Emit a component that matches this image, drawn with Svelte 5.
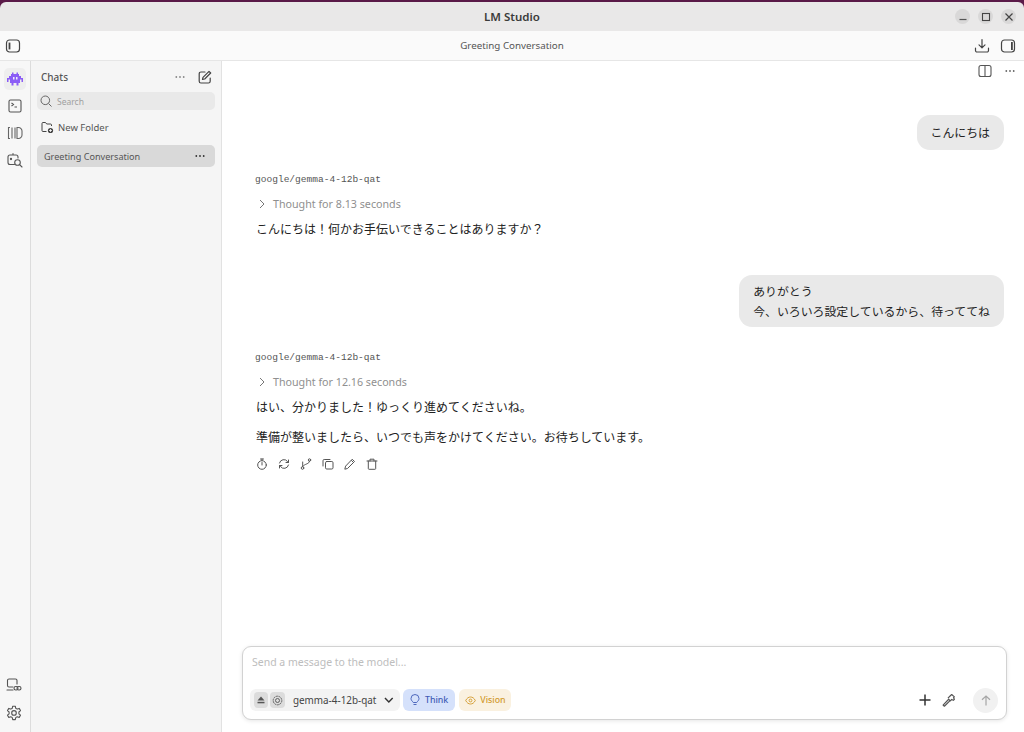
<script>
  let draft = $state("");
</script>

{#snippet dots(color)}
  <svg class="dot-icon" width="10" height="4" viewBox="0 0 10 4" fill={color}><circle cx="1.300" cy="2" r=".9"/><circle cx="5" cy="2" r=".9"/><circle cx="8.700" cy="2" r=".9"/></svg>
{/snippet}

<div class="window">
  <header class="titlebar">
    <span class="title">LM Studio</span>
    <div class="wm">
      <span class="wm-btn"><svg width="10" height="10" viewBox="0 0 10 10"><path d="M1.500 7.500h7" stroke="#555" stroke-width="1.200"/></svg></span>
      <span class="wm-btn"><svg width="10" height="10" viewBox="0 0 10 10"><rect x="1.500" y="1.500" width="7" height="7" fill="none" stroke="#444" stroke-width="1.100"/></svg></span>
      <span class="wm-btn"><svg width="10" height="10" viewBox="0 0 10 10"><path d="M1.500 1.500l7 7M8.500 1.500l-7 7" stroke="#444" stroke-width="1.200"/></svg></span>
    </div>
  </header>

  <div class="toolbar">
    <svg class="tb-left" width="16" height="16" viewBox="0 0 16 16" fill="none" stroke="#444" stroke-width="1.200"><rect x="1.500" y="2" width="13" height="12" rx="3"/><rect x="3.600" y="4.600" width="1.800" height="6.800" fill="#444" stroke="none"/></svg>
    <span class="conv-title">Greeting Conversation</span>
    <div class="tb-right">
      <svg width="16" height="16" viewBox="0 0 16 16" fill="none" stroke="#444" stroke-width="1.200" stroke-linecap="round" stroke-linejoin="round"><path d="M8 1.500v8M5 6.800l3 3 3-3M1.500 10v2.500a1.500 1.500 0 0 0 1.500 1.500h10a1.500 1.500 0 0 0 1.500-1.500V10"/></svg>
      <svg width="16" height="16" viewBox="0 0 16 16" fill="none" stroke="#444" stroke-width="1.200"><rect x="1.500" y="2" width="13" height="12" rx="3"/><rect x="11" y="4" width="1.800" height="8" fill="#444" stroke="none"/></svg>
    </div>
  </div>

  <div class="body">
    <nav class="rail">
      <div class="rail-top">
        <span class="rail-btn active">
          <svg width="18" height="16" viewBox="0 0 18 16" fill="#8b5cf6"><path d="M6 1.500h1.500V3h3V1.500H12V3h1v2h2v2h2v4h-1.500V8.500H14V12h-1.500v2.500H10.500V12h-3v2.500H5.500V12H4V8.500H2.500V11H1V7h2V5h2V3h1z"/><rect x="7" y="6" width="1.500" height="2.500" fill="#efe9fb"/><rect x="10" y="6" width="1.500" height="2.500" fill="#efe9fb"/></svg>
        </span>
        <span class="rail-btn">
          <svg width="14" height="14" viewBox="0 0 14 14" fill="none" stroke="#555" stroke-width="1.100"><rect x="1" y="1" width="12" height="12" rx="1.500"/><path d="M3.500 4l2 1.500-2 1.500M6.500 8h2.500"/></svg>
        </span>
        <span class="rail-btn">
          <svg width="16" height="14" viewBox="0 0 16 14" fill="none" stroke="#666" stroke-width="1.100"><path d="M3 1.500H1.500v11H3M5 1.500v11M8 1.500v11M10 1.500h1.500a3.500 3.500 0 0 1 3.500 3.500v4a3.500 3.500 0 0 1-3.500 3.500H10z"/></svg>
        </span>
        <span class="rail-btn">
          <svg width="16" height="16" viewBox="0 0 16 16" fill="none" stroke="#555" stroke-width="1.100" stroke-linecap="round"><path d="M6 3V1.500M7.500 12.500H3a2 2 0 0 1-2-2V5a2 2 0 0 1 2-2h6a2 2 0 0 1 2 2v1"/><circle cx="4" cy="7" r=".6" fill="#555"/><circle cx="10.500" cy="10.500" r="2.800"/><path d="M12.600 12.600l2.400 2.400"/></svg>
        </span>
      </div>
      <div class="rail-bottom">
        <svg width="16" height="14" viewBox="0 0 16 14" fill="none" stroke="#555" stroke-width="1.100" stroke-linecap="round"><path d="M7 9H3a1.500 1.500 0 0 1-1.500-1.500V2.500A1.500 1.500 0 0 1 3 1h6.500A1.500 1.500 0 0 1 11 2.500V6M1 12h6"/><rect x="8" y="8.500" width="4" height="3.500" rx="1.700"/><rect x="11" y="8.500" width="4" height="3.500" rx="1.700"/></svg>
        <svg width="16" height="16" viewBox="0 0 16 16" fill="none" stroke="#555" stroke-width="1.100" stroke-linejoin="round"><path d="M6.700 1.200h2.600l.4 2 1.500.9 2-.7 1.300 2.200-1.600 1.400v1.800l1.600 1.400-1.300 2.200-2-.7-1.500.9-.4 2H6.700l-.4-2-1.500-.9-2 .7L1.500 10.200l1.600-1.400V7L1.500 5.600l1.300-2.200 2 .7 1.500-.9z"/><circle cx="8" cy="7.900" r="2.300"/></svg>
      </div>
    </nav>

    <aside class="sidebar">
      <div class="side-head">
        <span class="chats">Chats</span>
        {@render dots("#888")}
        <svg width="14" height="14" viewBox="0 0 14 14" fill="none" stroke="#444" stroke-width="1.200" stroke-linecap="round" stroke-linejoin="round"><path d="M7 2H3a1.800 1.800 0 0 0-1.800 1.800v7.400A1.800 1.800 0 0 0 3 13h7.400a1.800 1.800 0 0 0 1.800-1.800V8"/><path d="M11 1.300l1.700 1.700-6 6-2.200.5.500-2.200z"/></svg>
      </div>
      <div class="search">
        <svg width="12" height="12" viewBox="0 0 12 12" fill="none" stroke="#666" stroke-width="1"><circle cx="5.300" cy="5.300" r="4.300"/><path d="M8.500 8.500l3 3"/></svg>
        <span>Search</span>
      </div>
      <div class="new-folder">
        <svg width="13" height="13" viewBox="0 0 13 13" fill="none" stroke="#444" stroke-width="1"><path d="M5.500 10.500H2A1 1 0 0 1 1 9.500v-7a1 1 0 0 1 1-1h2.500l1.200 1.500H9.500a1 1 0 0 1 1 1v1"/><circle cx="9.500" cy="9.500" r="2.600" fill="#444" stroke="none"/><path d="M9.500 8.200v2.600M8.200 9.500h2.600" stroke="#f5f5f5"/></svg>
        <span>New Folder</span>
      </div>
      <div class="chat-item">
        <span>Greeting Conversation</span>
        {@render dots("#333")}
      </div>
    </aside>

    <main class="main">
      <div class="main-tools">
        <svg width="14" height="14" viewBox="0 0 14 14" fill="none" stroke="#555" stroke-width="1.100"><rect x="1" y="1.500" width="12" height="11" rx="2"/><path d="M7 1.500v11"/></svg>
        {@render dots("#666")}
      </div>

      <div class="thread">
        <div class="user"><div class="bubble">こんにちは</div></div>

        <section class="reply first">
          <div class="model">google/gemma-4-12b-qat</div>
          <div class="thought">
            <svg width="8" height="10" viewBox="0 0 8 10" fill="none" stroke="#777" stroke-width="1"><path d="M2 1l4 4-4 4"/></svg>
            Thought for 8.13 seconds
          </div>
          <p>こんにちは！何かお手伝いできることはありますか？</p>
        </section>

        <div class="user second">
          <div class="bubble">ありがとう<br />今、いろいろ設定しているから、待っててね</div>
        </div>

        <section class="reply">
          <div class="model">google/gemma-4-12b-qat</div>
          <div class="thought">
            <svg width="8" height="10" viewBox="0 0 8 10" fill="none" stroke="#777" stroke-width="1"><path d="M2 1l4 4-4 4"/></svg>
            Thought for 12.16 seconds
          </div>
          <p>はい、分かりました！ゆっくり進めてくださいね。</p>
          <p class="next">準備が整いましたら、いつでも声をかけてください。お待ちしています。</p>
          <div class="actions">
            <svg viewBox="0 0 12 12"><circle cx="6" cy="7" r="4.300"/><path d="M6 7V4.500M4.500 1h3M6 1v1.500"/></svg>
            <svg viewBox="0 0 12 12"><path d="M1.500 5a4.500 4.500 0 0 1 8-1.500l1 1M10.500 7a4.500 4.500 0 0 1-8 1.500l-1-1M10.500 2v2.500H8M1.500 10V7.500H4"/></svg>
            <svg viewBox="0 0 12 12"><circle cx="2.500" cy="10" r="1.300"/><circle cx="9.500" cy="2" r="1.200"/><path d="M2.700 8.700V4M9.500 3.200c0 3-5 2.500-6.500 5"/></svg>
            <svg viewBox="0 0 12 12"><rect x="3.500" y="3.500" width="7.500" height="7.500" rx="1.200"/><path d="M8 1.500H2.200A1.200 1.200 0 0 0 1 2.700V8"/></svg>
            <svg viewBox="0 0 12 12"><path d="M8.500 1.500l2 2-7 7-2.700.7.700-2.700zM7.500 2.500l2 2"/></svg>
            <svg viewBox="0 0 12 12"><path d="M1 3h10M4 3V1.200h4V3M2.300 3v7.500a.8.800 0 0 0 .8.800h5.800a.8.800 0 0 0 .8-.8V3"/></svg>
          </div>
        </section>
      </div>

      <div class="composer-wrap">
        <div class="composer">
          <input bind:value={draft} placeholder="Send a message to the model..." />
          <div class="controls">
            <div class="model-pick">
              <span class="square">
                <svg width="10" height="10" viewBox="0 0 10 10" fill="#555"><path d="M5 1.500l3.500 4h-7z"/><rect x="1.500" y="6.800" width="7" height="1.500"/></svg>
              </span>
              <span class="square">
                <svg width="11" height="11" viewBox="0 0 11 11" fill="none" stroke="#555" stroke-width=".9"><circle cx="5.500" cy="5.500" r="4.300" stroke-dasharray="2 .6"/><circle cx="5.500" cy="5.500" r="2"/></svg>
              </span>
              <span class="model-name">gemma-4-12b-qat</span>
              <svg width="10" height="7" viewBox="0 0 10 7" fill="none" stroke="#333" stroke-width="1.500"><path d="M1 1l4 4 4-4"/></svg>
            </div>
            <span class="tag think">
              <svg width="10" height="12" viewBox="0 0 10 12" fill="none" stroke="#3f5bb5" stroke-width=".9"><path d="M3.300 8.500C2.600 7.300 1 6.500 1 4.500a4 4 0 0 1 8 0c0 2-1.600 2.800-2.300 4zM3.500 10.500h3"/></svg>
              Think
            </span>
            <span class="tag vision">
              <svg width="11" height="9" viewBox="0 0 11 9" fill="none" stroke="#d29a2c" stroke-width=".9"><path d="M.7 4.500C2 2 3.600 1 5.500 1s3.500 1 4.800 3.500C9 7 7.400 8 5.500 8S2 7 .7 4.500z"/><circle cx="5.500" cy="4.500" r="1.400"/></svg>
              Vision
            </span>
            <div class="spacer"></div>
            <svg class="plus" width="12" height="12" viewBox="0 0 12 12" stroke="#333" stroke-width="1.500"><path d="M6 .5v11M.5 6h11"/></svg>
            <svg class="hammer" width="14" height="14" viewBox="0 0 13 13" fill="none" stroke="#555" stroke-width="1.100" stroke-linejoin="round"><path d="M1 11.200l5.200-5.400 1.300 1.300L2.200 12.300zM5.500 4.800L8 2.300l1-.9 2.500 2.200-.8.700.8 1.500-1 1-1.500-.8-1.500 1.500"/></svg>
            <span class="send">
              <svg width="10" height="11" viewBox="0 0 10 11" fill="none" stroke="#a6a6a6" stroke-width="1.200"><path d="M5 10.500V1M1 4.800L5 1l4 3.800"/></svg>
            </span>
          </div>
        </div>
      </div>
    </main>
  </div>
</div>

<style>
  :global(body) {
    margin: 0;
    font-family: "Noto Sans", "Noto Sans CJK JP", sans-serif;
    background: #fff;
    color: #333;
  }

  .window {
    width: 1024px;
    height: 732px;
    display: flex;
    flex-direction: column;
    overflow: hidden;
    padding-top: 2px;
    box-sizing: border-box;
    background: #5a1a48;
  }

  .titlebar {
    height: 29px;
    flex: none;
    background: #e9e8e8;
    border-radius: 6px 6px 0 0;
    display: flex;
    align-items: center;
    justify-content: center;
    position: relative;
  }

  .title {
    font-size: 11.500px;
    font-weight: 600;
    color: #3b3b3b;
  }

  .wm {
    position: absolute;
    right: 8px;
    top: 7px;
    display: flex;
    gap: 8px;
  }

  .wm-btn {
    width: 15px;
    height: 15px;
    border-radius: 50%;
    background: #d9d8d8;
    display: flex;
    align-items: center;
    justify-content: center;
  }

  .toolbar {
    height: 30px;
    flex: none;
    box-sizing: border-box;
    background: #fafafa;
    border-bottom: 1px solid #e6e6e6;
    display: flex;
    align-items: center;
    justify-content: center;
    position: relative;
  }

  .tb-left {
    position: absolute;
    left: 5px;
    top: 7px;
  }

  .tb-right {
    position: absolute;
    right: 8px;
    top: 7px;
    display: flex;
    gap: 10px;
  }

  .conv-title {
    font-size: 9.800px;
    color: #555;
  }

  .body {
    flex: 1;
    display: flex;
    min-height: 0;
    background: #fff;
  }

  .rail {
    width: 31px;
    flex: none;
    box-sizing: border-box;
    background: #f7f7f7;
    border-right: 1px solid #dcdcdc;
    display: flex;
    flex-direction: column;
    justify-content: space-between;
    align-items: center;
    padding: 7px 1px 11px 0;
  }

  .rail-top {
    display: flex;
    flex-direction: column;
    align-items: center;
    gap: 5px;
  }

  .rail-bottom {
    display: flex;
    flex-direction: column;
    align-items: center;
    gap: 13px;
    margin-right: 2px;
  }

  .rail-btn {
    width: 22px;
    height: 22px;
    display: flex;
    align-items: center;
    justify-content: center;
    border-radius: 5px;
  }

  .rail-btn.active {
    background: #eeeeee;
  }

  .sidebar {
    width: 191px;
    flex: none;
    background: #f5f5f5;
    border-right: 1px solid #e2e2e2;
    padding: 8px 6px 0;
    box-sizing: border-box;
  }

  .side-head {
    display: flex;
    align-items: center;
    height: 16px;
    padding: 0 3px 0 4px;
  }

  .chats {
    font-size: 10px;
    color: #555;
    font-weight: 500;
    flex: 1;
  }

  .side-head .dot-icon {
    margin-right: 13px;
  }

  .search {
    margin-top: 7px;
    height: 18px;
    background: #e9e9e9;
    border-radius: 5px;
    display: flex;
    align-items: center;
    gap: 5px;
    padding: 0 3px;
    font-size: 8.500px;
    color: #a0a0a0;
  }

  .new-folder {
    margin-top: 8px;
    height: 18px;
    display: flex;
    align-items: center;
    gap: 4px;
    padding: 0 4px;
    font-size: 9.500px;
    color: #555;
  }

  .chat-item {
    margin-top: 9px;
    height: 22px;
    background: #d9d9d9;
    border-radius: 5px;
    display: flex;
    align-items: center;
    justify-content: space-between;
    padding: 0 10px 0 7px;
    font-size: 9.100px;
    color: #555;
  }

  .main {
    flex: 1;
    min-width: 0;
    background: #fff;
    display: flex;
    flex-direction: column;
    position: relative;
  }

  .main-tools {
    position: absolute;
    right: 9px;
    top: 3px;
    display: flex;
    align-items: center;
    gap: 13px;
  }

  .thread {
    flex: 1;
    padding: 54px 20px 0 33px;
    min-height: 0;
  }

  .user {
    display: flex;
    justify-content: flex-end;
  }

  .user.second {
    margin-top: 36px;
  }

  .bubble {
    background: #e9e9e9;
    border-radius: 13px;
    padding: 6px 14px;
    font-size: 11.900px;
    line-height: 20px;
    color: #222;
  }

  .user:first-child .bubble {
    padding: 7px 14px 8px;
  }

  .reply {
    margin-top: 24px;
  }

  .reply.first {
    margin-top: 23px;
  }

  .model {
    font-family: "Liberation Mono", monospace;
    font-size: 9.550px;
    line-height: 14px;
    color: #555;
  }

  .thought {
    margin-top: 10px;
    display: flex;
    align-items: center;
    gap: 7px;
    padding-left: 3px;
    font-size: 10.700px;
    line-height: 14px;
    color: #8f8f8f;
  }

  .reply p {
    margin: 10px 0 0 1px;
    font-size: 12px;
    line-height: 18px;
    color: #222;
  }

  .reply p.next {
    margin-top: 12px;
  }

  .actions {
    margin-top: 11px;
    display: flex;
    gap: 10px;
    padding-left: 1px;
  }

  .actions svg {
    width: 12px;
    height: 12px;
    fill: none;
    stroke: #555;
    stroke-width: 1;
    stroke-linecap: round;
    stroke-linejoin: round;
  }

  .composer-wrap {
    padding: 0 17px 12px 20px;
    flex: none;
  }

  .composer {
    height: 74px;
    box-sizing: border-box;
    border: 1px solid #d2d2d2;
    border-radius: 9px;
    box-shadow: 0 1px 4px rgba(0, 0, 0, 0.1);
    background: #fff;
    padding: 7px 8px 0 7px;
  }

  .composer input {
    display: block;
    width: 100%;
    box-sizing: border-box;
    border: none;
    outline: none;
    padding: 0 2px;
    height: 16px;
    font: inherit;
    font-size: 10.500px;
    background: transparent;
  }

  .composer input::placeholder {
    color: #bdbdbd;
  }

  .controls {
    margin-top: 19px;
    display: flex;
    align-items: center;
    height: 22px;
  }

  .model-pick {
    height: 22px;
    background: #f3f3f3;
    border-radius: 6px;
    display: flex;
    align-items: center;
    padding: 0 6px 0 4px;
    gap: 2px;
    box-sizing: border-box;
    width: 150px;
  }

  .square {
    width: 15px;
    height: 16px;
    border-radius: 4px;
    background: #dcdcdc;
    display: flex;
    align-items: center;
    justify-content: center;
  }

  .model-name {
    font-size: 9.900px;
    color: #444;
    margin: 0 6px 0 6px;
    white-space: nowrap;
    flex: 1;
  }

  .tag {
    height: 22px;
    border-radius: 6px;
    margin-left: 3px;
    display: flex;
    align-items: center;
    gap: 5px;
    font-size: 8.800px;
    font-weight: 500;
    box-sizing: border-box;
    padding: 0 7px;
  }

  .think {
    background: #d5e1fb;
    color: #3f5bb5;
  }

  .vision {
    background: #faf1e0;
    color: #d29a2c;
    margin-left: 4px;
    padding: 0 5px 0 6px;
    gap: 4px;
  }

  .spacer {
    flex: 1;
  }

  .hammer {
    margin-left: 11px;
  }

  .send {
    margin-left: 17px;
    width: 25px;
    height: 25px;
    border-radius: 50%;
    background: #f1f1f1;
    display: flex;
    align-items: center;
    justify-content: center;
  }
</style>
